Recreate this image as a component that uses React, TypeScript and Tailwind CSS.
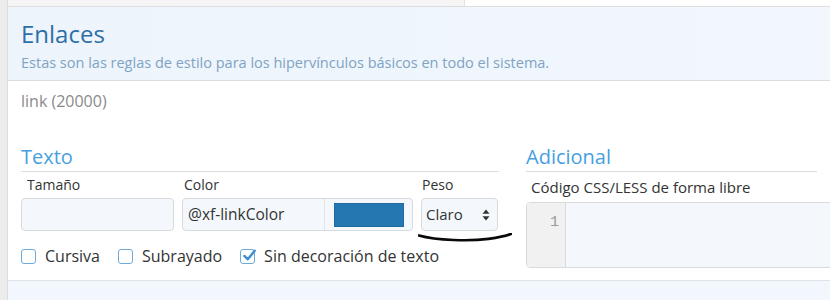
import React from 'react';

function Check({ checked }: { checked?: boolean }) {
  return (
    <span className="relative inline-flex h-[15px] w-[15px] shrink-0 items-center justify-center rounded-[3px] border border-[#6fa9d8] bg-white">
      {checked && (
        <svg viewBox="0 0 16 16" className="absolute -top-[2px] left-[1px] h-[15px] w-[15px]">
          <path d="M2.5 8.5 L6.2 12 L13.5 3" fill="none" stroke="#3f8fd2" strokeWidth="2.6" strokeLinecap="round" strokeLinejoin="round" />
        </svg>
      )}
    </span>
  );
}

export default function App() {
  return (
    <div className="flex h-[300px] w-[830px] overflow-hidden bg-white font-['Open_Sans',sans-serif] text-[#333]">
      <div className="w-[8px] shrink-0 border-r border-[#dcdcdc] bg-[#ececec]" />
      <div className="flex min-w-0 flex-1 flex-col">
        {/* top strip */}
        <div className="flex h-[7px] shrink-0 border-b border-[#dedede]">
          <div className="w-[457px] border-r border-[#e2e2e2] bg-[#f5f5f5]" />
          <div className="flex-1 bg-white" />
        </div>

        {/* header */}
        <div className="h-[74px] shrink-0 border-b border-[#d8dde2] bg-gradient-to-r from-[#edf4fb] to-[#f1f7fd] px-[13px] pt-[11px]">
          <h1 className="text-[24px] leading-[32px] text-[#2e6ea7]">Enlaces</h1>
          <p className="mt-[3px] whitespace-nowrap text-[14.5px] leading-[20px] text-[#7fa3c4]">
            Estas son las reglas de estilo para los hipervínculos básicos en todo el sistema.
          </p>
        </div>

        {/* body */}
        <div className="h-[200px] shrink-0 border-b border-[#e0e3e6] px-[13px]">
          <div className="pt-[10px] text-[16px] leading-[20px] text-[#8a8a8a]">link (20000)</div>

          <div className="mt-[34px] flex gap-[27px]">
            {/* Texto */}
            <div className="w-[478px] shrink-0">
              <div className="border-b border-[#dcdcdc] pb-[2px] text-[20px] leading-[24px] text-[#47a0e0]">Texto</div>
              <div className="flex gap-[8px] pt-[2px]">
                <div className="w-[153px]">
                  <div className="px-[6px] text-[14px] leading-[22px] text-[#333]">Tamaño</div>
                  <div className="mt-[2px] h-[33px] rounded-[4px] border border-[#d8dbde] bg-[#f4f8fc]" />
                </div>
                <div className="w-[231px]">
                  <div className="px-[2px] text-[14px] leading-[22px] text-[#333]">Color</div>
                  <div className="mt-[2px] flex h-[33px] overflow-hidden rounded-[4px] border border-[#d8dbde] bg-[#f4f8fc]">
                    <div className="flex w-[142px] items-center whitespace-nowrap border-r border-[#e2e5e8] px-[5px] text-[15.5px] text-[#333]">@xf-linkColor</div>
                    <div className="flex flex-1 items-center justify-center">
                      <div className="h-[24px] w-[70px] border border-[#1f6aa1] bg-[#2577b1]" />
                    </div>
                  </div>
                </div>
                <div className="relative w-[77px]">
                  <div className="px-[1px] text-[14px] leading-[22px] text-[#333]">Peso</div>
                  <div className="mt-[2px] flex h-[33px] items-center justify-between rounded-[4px] border border-[#d8dbde] bg-[#f4f8fc] pl-[4px] pr-[7px] text-[15px] text-[#333]">
                    <span>Claro</span>
                    <svg viewBox="0 0 8 12" className="h-[12px] w-[8px]">
                      <path d="M4 0.5 L7.5 4.8 H0.5 Z M4 11.5 L7.5 7.2 H0.5 Z" fill="#333" />
                    </svg>
                  </div>
                  <svg viewBox="0 0 100 12" className="absolute left-[-3px] top-[59px] h-[10px] w-[94px]" preserveAspectRatio="none">
                    <path d="M1 3 C 20 9, 55 10, 75 7 C 88 5, 95 3, 99 1" fill="none" stroke="#0a0a0a" strokeWidth="3.2" strokeLinecap="round" />
                  </svg>
                </div>
              </div>
              <div className="mt-[15px] flex items-center whitespace-nowrap text-[16px] leading-[20px] text-[#333]">
                <label className="flex items-center gap-[9px]"><Check />Cursiva</label>
                <label className="ml-[18px] flex items-center gap-[9px]"><Check />Subrayado</label>
                <label className="ml-[18px] flex items-center gap-[9px]"><Check checked />Sin decoración de texto</label>
              </div>
            </div>

            {/* Adicional */}
            <div className="min-w-0 flex-1">
              <div className="border-b border-[#dcdcdc] pb-[2px] text-[20px] leading-[24px] text-[#47a0e0]">Adicional</div>
              <div className="whitespace-nowrap px-[5px] pt-[4px] text-[15px] leading-[22px] text-[#333]">Código CSS/LESS de forma libre</div>
              <div className="mt-[4px] flex h-[66px] w-[320px] overflow-hidden rounded-[4px] border border-[#d8dbde]">
                <div className="w-[39px] border-r border-[#dadada] bg-[#f1f1f1] pr-[6px] pt-[10px] text-right font-['Liberation_Mono',monospace] text-[15px] leading-[20px] text-[#999]">1</div>
                <div className="flex-1 bg-[#f4f8fc]" />
              </div>
            </div>
          </div>
        </div>

        <div className="flex-1 bg-[#f1f7fc]" />
      </div>
    </div>
  );
}
